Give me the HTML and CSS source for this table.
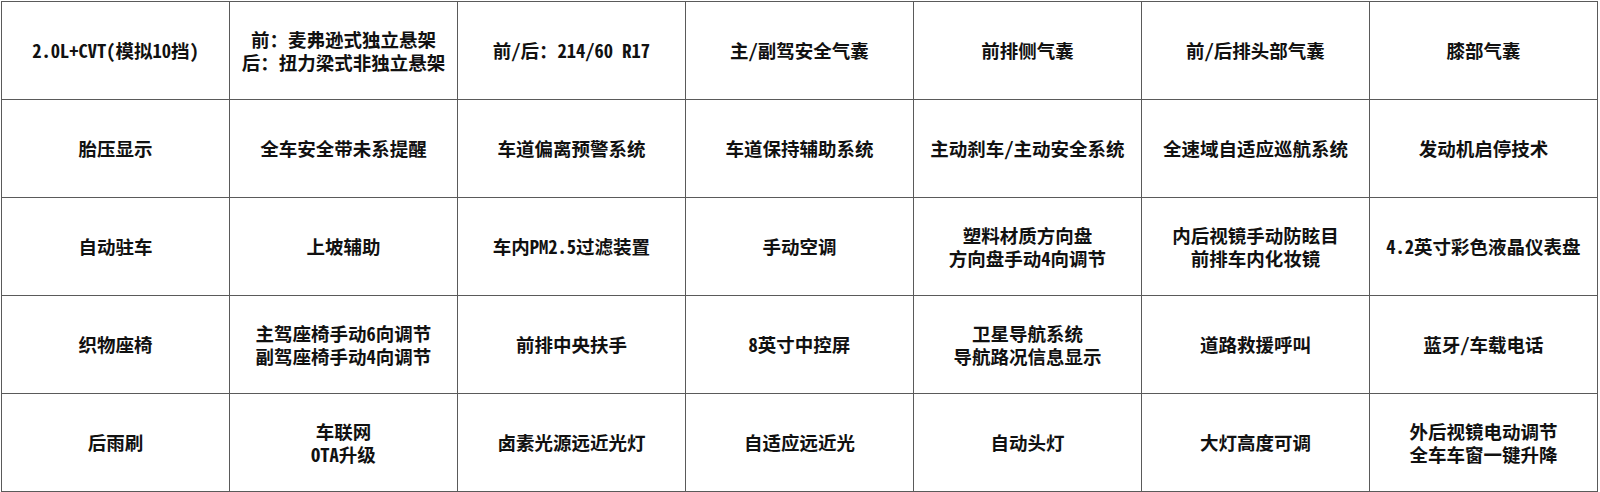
FILE: index.html
```html
<!DOCTYPE html>
<html lang="zh-CN">
<head>
<meta charset="utf-8">
<title>配置</title>
<link rel="stylesheet" href="styles.css">
</head>
<body>
<div class="sheet">
  <div class="cell">2.0L+CVT(模拟10挡)</div>
  <div class="cell">前：麦弗逊式独立悬架<br>后：扭力梁式非独立悬架</div>
  <div class="cell">前/后：214/60 R17</div>
  <div class="cell">主/副驾安全气囊</div>
  <div class="cell">前排侧气囊</div>
  <div class="cell">前/后排头部气囊</div>
  <div class="cell">膝部气囊</div>

  <div class="cell">胎压显示</div>
  <div class="cell">全车安全带未系提醒</div>
  <div class="cell">车道偏离预警系统</div>
  <div class="cell">车道保持辅助系统</div>
  <div class="cell">主动刹车/主动安全系统</div>
  <div class="cell">全速域自适应巡航系统</div>
  <div class="cell">发动机启停技术</div>

  <div class="cell">自动驻车</div>
  <div class="cell">上坡辅助</div>
  <div class="cell">车内PM2.5过滤装置</div>
  <div class="cell">手动空调</div>
  <div class="cell">塑料材质方向盘<br>方向盘手动4向调节</div>
  <div class="cell">内后视镜手动防眩目<br>前排车内化妆镜</div>
  <div class="cell">4.2英寸彩色液晶仪表盘</div>

  <div class="cell">织物座椅</div>
  <div class="cell">主驾座椅手动6向调节<br>副驾座椅手动4向调节</div>
  <div class="cell">前排中央扶手</div>
  <div class="cell">8英寸中控屏</div>
  <div class="cell">卫星导航系统<br>导航路况信息显示</div>
  <div class="cell">道路救援呼叫</div>
  <div class="cell">蓝牙/车载电话</div>

  <div class="cell">后雨刷</div>
  <div class="cell">车联网<br>OTA升级</div>
  <div class="cell">卤素光源远近光灯</div>
  <div class="cell">自适应远近光</div>
  <div class="cell">自动头灯</div>
  <div class="cell">大灯高度可调</div>
  <div class="cell">外后视镜电动调节<br>全车车窗一键升降</div>
</div>
</body>
</html>
```

FILE: styles.css
```css
html, body {
  margin: 0;
  padding: 0;
  background: #ffffff;
}

body {
  padding: 1px 0 0 1px;
}

.sheet {
  display: grid;
  grid-template-columns: repeat(7, 228px);
  grid-template-rows: repeat(5, 98px);
  width: max-content;
  border-left: 1px solid #5a5a5a;
  border-top: 1px solid #5a5a5a;
}

.cell {
  box-sizing: border-box;
  border-right: 1px solid #5a5a5a;
  border-bottom: 1px solid #5a5a5a;
  display: flex;
  align-items: center;
  justify-content: center;
  text-align: center;
  font-family: "Noto Sans CJK SC", "Noto Sans", sans-serif;
  font-feature-settings: "hwid" 1;
  font-weight: 700;
  font-size: 18.5px;
  line-height: 23px;
  color: #111;
}
```
